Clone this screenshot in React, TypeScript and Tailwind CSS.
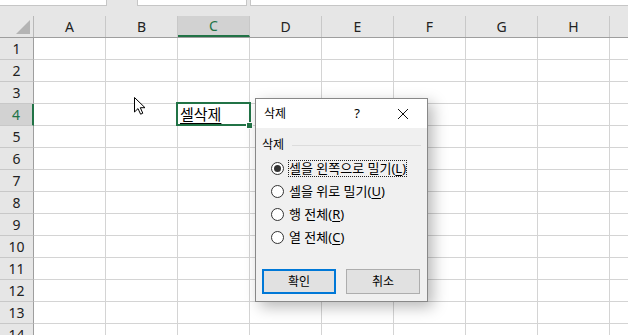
const COLS = ['A', 'B', 'C', 'D', 'E', 'F', 'G', 'H', 'I'];
const ROWS = Array.from({ length: 14 }, (_, i) => i + 1);

const FONT = "font-['Noto_Sans','Noto_Sans_CJK_KR',sans-serif]";

function Radio({ checked }: { checked?: boolean }) {
  return (
    <span className="flex h-[13px] w-[13px] shrink-0 items-center justify-center rounded-full border border-[#333] bg-white">
      {checked && <span className="h-[7px] w-[7px] rounded-full bg-[#333]" />}
    </span>
  );
}

function Option({ label, hot, checked }: { label: string; hot: string; checked?: boolean }) {
  return (
    <div className="flex h-[23px] items-center gap-[4px] pl-[9px]">
      <Radio checked={checked} />
      <span
        className={
          'px-[1px] text-[13px] leading-[17px] text-black ' +
          (checked ? 'outline-1 outline-dotted outline-[#222] -outline-offset-1' : '')
        }
      >
        {label}(<span className="underline underline-offset-2">{hot}</span>)
      </span>
    </div>
  );
}

function DeleteDialog() {
  return (
    <div className="absolute left-[255px] top-[98px] flex h-[204px] w-[173px] flex-col border border-[#888] bg-[#f0f0f0] shadow-[5px_5px_14px_rgba(0,0,0,0.28)]">
      <div className="flex h-[29px] items-center bg-white pl-[8px] text-[12px] text-black">
        <span>삭제</span>
        <span className="ml-auto mr-[37px] text-[13px]">?</span>
        <svg width="12" height="12" viewBox="0 0 12 12" className="mr-[18px]">
          <path d="M1 1 L11 11 M11 1 L1 11" stroke="#111" strokeWidth="1" />
        </svg>
      </div>
      <div className="flex flex-col px-[6px] pt-[8px]">
        <div className="flex items-center gap-[8px] text-[12px] text-black">
          <span>삭제</span>
          <span className="h-px flex-1 bg-[#dcdcdc]" />
        </div>
        <div className="mt-[3px] flex flex-col">
          <Option label="셀을 왼쪽으로 밀기" hot="L" checked />
          <Option label="셀을 위로 밀기" hot="U" />
          <Option label="행 전체" hot="R" />
          <Option label="열 전체" hot="C" />
        </div>
        <div className="mt-[20px] flex gap-[10px]">
          <button className="flex h-[25px] w-[74px] items-center justify-center border-2 border-[#0078d7] bg-[#e1e1e1] text-[12px] text-black">
            확인
          </button>
          <button className="flex h-[25px] w-[74px] items-center justify-center border border-[#adadad] bg-[#e1e1e1] text-[12px] text-black">
            취소
          </button>
        </div>
      </div>
    </div>
  );
}

function Cursor() {
  return (
    <svg width="14" height="20" viewBox="0 0 14 20" className="absolute left-[133px] top-[96px]">
      <path
        d="M1.5 1.5 L1.5 16 L5 12.6 L7.6 18.2 L9.8 17.2 L7.3 11.7 L12 11.7 Z"
        fill="#fff"
        stroke="#000"
        strokeWidth="1"
      />
    </svg>
  );
}

export default function App() {
  return (
    <div className={`relative h-[335px] w-[628px] overflow-hidden bg-white ${FONT}`}>
      {/* formula bar remnants */}
      <div className="flex h-[6px] bg-[#e6e6e6]">
        <div className="w-[107px] border-b border-r border-[#c6c6c6] bg-white" />
        <div className="ml-[30px] w-[110px] border-b border-l border-r border-[#c6c6c6] bg-white" />
        <div className="ml-[3px] flex-1 border-b border-l border-[#c6c6c6] bg-white" />
      </div>
      <div className="h-[10px] bg-[#e6e6e6]" />

      {/* column headers */}
      <div className="flex h-[22px] border-b border-[#9e9e9e] bg-[#e6e6e6]">
        <div className="relative w-[34px] shrink-0 border-r border-[#b8b8b8]">
          <svg width="14" height="14" viewBox="0 0 14 14" className="absolute left-[16px] top-[4px]">
            <path d="M14 0 L14 14 L0 14 Z" fill="#b4b4b4" />
          </svg>
        </div>
        {COLS.map((c) => (
          <div
            key={c}
            className={
              'flex w-[72px] shrink-0 items-center justify-center border-r border-[#c8c8c8] text-[14px] ' +
              (c === 'C' ? 'border-b-2 border-b-[#217346] bg-[#d2d2d2] text-[#217346]' : 'text-[#222]')
            }
          >
            {c === 'I' ? '' : c}
          </div>
        ))}
      </div>

      {/* rows */}
      {ROWS.map((r) => (
        <div key={r} className="flex h-[22px]">
          <div
            className={
              'flex w-[34px] shrink-0 items-center justify-center border-b border-[#c8c8c8] text-[14px] ' +
              (r === 4
                ? 'border-r-2 border-r-[#217346] bg-[#d2d2d2] text-[#217346]'
                : 'border-r border-r-[#9e9e9e] bg-[#e6e6e6] text-[#222]')
            }
          >
            {r}
          </div>
          {COLS.map((c) => (
            <div key={c} className="relative w-[72px] shrink-0 border-b border-r border-[#d4d4d4]">
              {r === 4 && c === 'C' && (
                <span className="absolute left-[2px] top-[0px] text-[15px] leading-[20px] text-black underline underline-offset-[3px]">
                  셀삭제
                </span>
              )}
            </div>
          ))}
        </div>
      ))}

      {/* active cell */}
      <div className="absolute left-[176px] top-[102px] h-[24px] w-[75px] border-2 border-[#217346]" />
      <div className="absolute left-[247px] top-[123px] h-[5px] w-[5px] bg-[#217346] outline outline-1 outline-white" />

      <Cursor />
      <DeleteDialog />
    </div>
  );
}
